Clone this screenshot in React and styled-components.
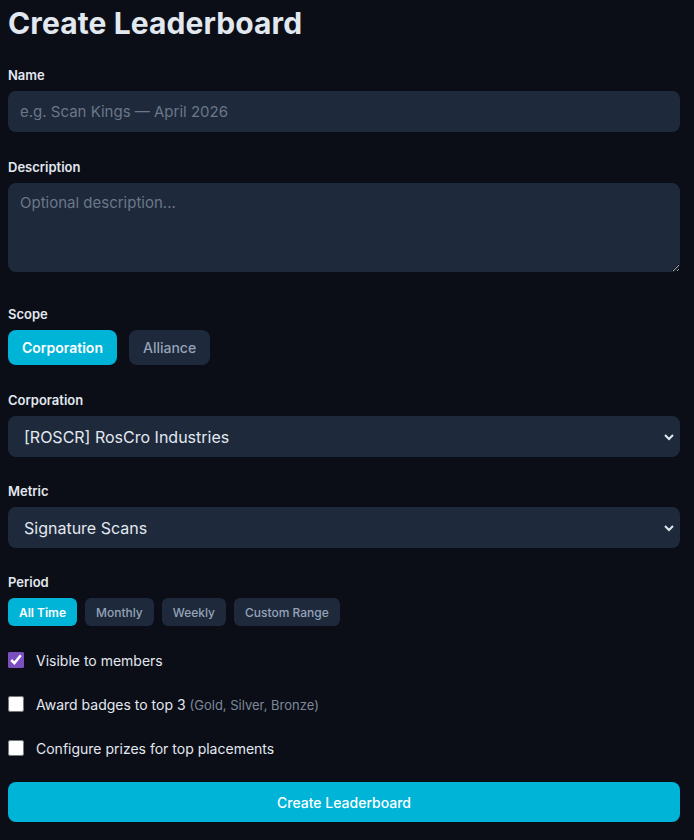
import React from "react"
import styled, { createGlobalStyle } from "styled-components"

const GlobalStyle = createGlobalStyle`
  body {
    margin: 0;
    background: #0b0e17;
    font-family: Inter, "Liberation Sans", sans-serif;
    color: #e2e8f0;
  }
`

const Page = styled.div`
  padding: 8px 14px 18px 8px;
`

const Title = styled.h1`
  margin: 0 0 29px;
  font-size: 30px;
  line-height: 30px;
  font-weight: 700;
  color: #e2e8f0;
  letter-spacing: 0.1px;
`

const Field = styled.div`
  display: flex;
  flex-direction: column;
  gap: 8px;
  margin-bottom: ${(p) => p.$mb || 26}px;
`

const Label = styled.label`
  font-size: 13px;
  line-height: 16px;
  font-weight: 600;
  color: #e2e8f0;
`

const inputBase = `
  box-sizing: border-box;
  width: 100%;
  background: #1e293b;
  border: none;
  border-radius: 8px;
  color: #e2e8f0;
  font-family: Inter, "Liberation Sans", sans-serif;
  outline: none;
  &::placeholder {
    color: #6b7789;
  }
`

const TextInput = styled.input`
  ${inputBase}
  height: 41px;
  padding: 0 12px;
  font-size: 15px;
`

const TextArea = styled.textarea`
  ${inputBase}
  display: block;
  height: 89px;
  padding: 10px 12px;
  font-size: 15px;
  resize: vertical;
`

const Select = styled.select`
  ${inputBase}
  height: 41px;
  padding: 0 12px;
  font-size: 16px;
  appearance: none;
  background-image: url("data:image/svg+xml,%3Csvg xmlns='http://www.w3.org/2000/svg' width='10' height='8' viewBox='0 0 10 8'%3E%3Cpath d='M1 2l4 4 4-4' stroke='%23e2e8f0' stroke-width='2' fill='none'/%3E%3C/svg%3E");
  background-repeat: no-repeat;
  background-position: right 6px center;
  padding-left: 16px;
`

const ButtonRow = styled.div`
  display: flex;
  gap: ${(p) => p.$gap}px;
`

const Toggle = styled.button`
  height: ${(p) => (p.$small ? 28 : 35)}px;
  padding: 0 ${(p) => (p.$small ? 11 : 14)}px;
  border: none;
  border-radius: ${(p) => (p.$small ? 6 : 8)}px;
  font-family: Inter, "Liberation Sans", sans-serif;
  font-size: ${(p) => (p.$small ? 12 : 14)}px;
  font-weight: ${(p) => (p.$active ? 600 : 500)};
  background: ${(p) => (p.$active ? "#00b4d8" : "#1e293b")};
  color: ${(p) => (p.$active ? "#ffffff" : "#94a3b8")};
  cursor: pointer;
`

const CheckRow = styled.label`
  display: flex;
  align-items: center;
  gap: 12px;
  height: 16px;
  margin-bottom: 28px;
  font-size: 14px;
  color: #e2e8f0;
`

const Check = styled.input`
  width: 16px;
  height: 16px;
  margin: 0;
  accent-color: #7b4fbf;
`

const Hint = styled.span`
  color: #7d8899;
  font-size: 13px;
`

const Submit = styled.button`
  width: 100%;
  height: 40px;
  margin-top: -2px;
  border: none;
  border-radius: 8px;
  background: #00b4d8;
  color: #ffffff;
  font-family: Inter, "Liberation Sans", sans-serif;
  font-size: 14px;
  font-weight: 500;
`

const App = () => (
  <Page>
    <GlobalStyle />
    <Title>Create Leaderboard</Title>
    <Field $mb={27}>
      <Label>Name</Label>
      <TextInput placeholder="e.g. Scan Kings — April 2026" />
    </Field>
    <Field $mb={34}>
      <Label>Description</Label>
      <TextArea placeholder="Optional description..." />
    </Field>
    <Field $mb={27}>
      <Label>Scope</Label>
      <ButtonRow $gap={12}>
        <Toggle $active>Corporation</Toggle>
        <Toggle>Alliance</Toggle>
      </ButtonRow>
    </Field>
    <Field>
      <Label>Corporation</Label>
      <Select defaultValue="roscr">
        <option value="roscr">[ROSCR] RosCro Industries</option>
      </Select>
    </Field>
    <Field>
      <Label>Metric</Label>
      <Select defaultValue="sig">
        <option value="sig">Signature Scans</option>
      </Select>
    </Field>
    <Field $mb={26}>
      <Label>Period</Label>
      <ButtonRow $gap={8}>
        <Toggle $small $active>All Time</Toggle>
        <Toggle $small>Monthly</Toggle>
        <Toggle $small>Weekly</Toggle>
        <Toggle $small>Custom Range</Toggle>
      </ButtonRow>
    </Field>
    <CheckRow>
      <Check type="checkbox" defaultChecked />
      Visible to members
    </CheckRow>
    <CheckRow>
      <Check type="checkbox" />
      <span>
        Award badges to top 3 <Hint>(Gold, Silver, Bronze)</Hint>
      </span>
    </CheckRow>
    <CheckRow>
      <Check type="checkbox" />
      Configure prizes for top placements
    </CheckRow>
    <Submit>Create Leaderboard</Submit>
  </Page>
)

export default App
